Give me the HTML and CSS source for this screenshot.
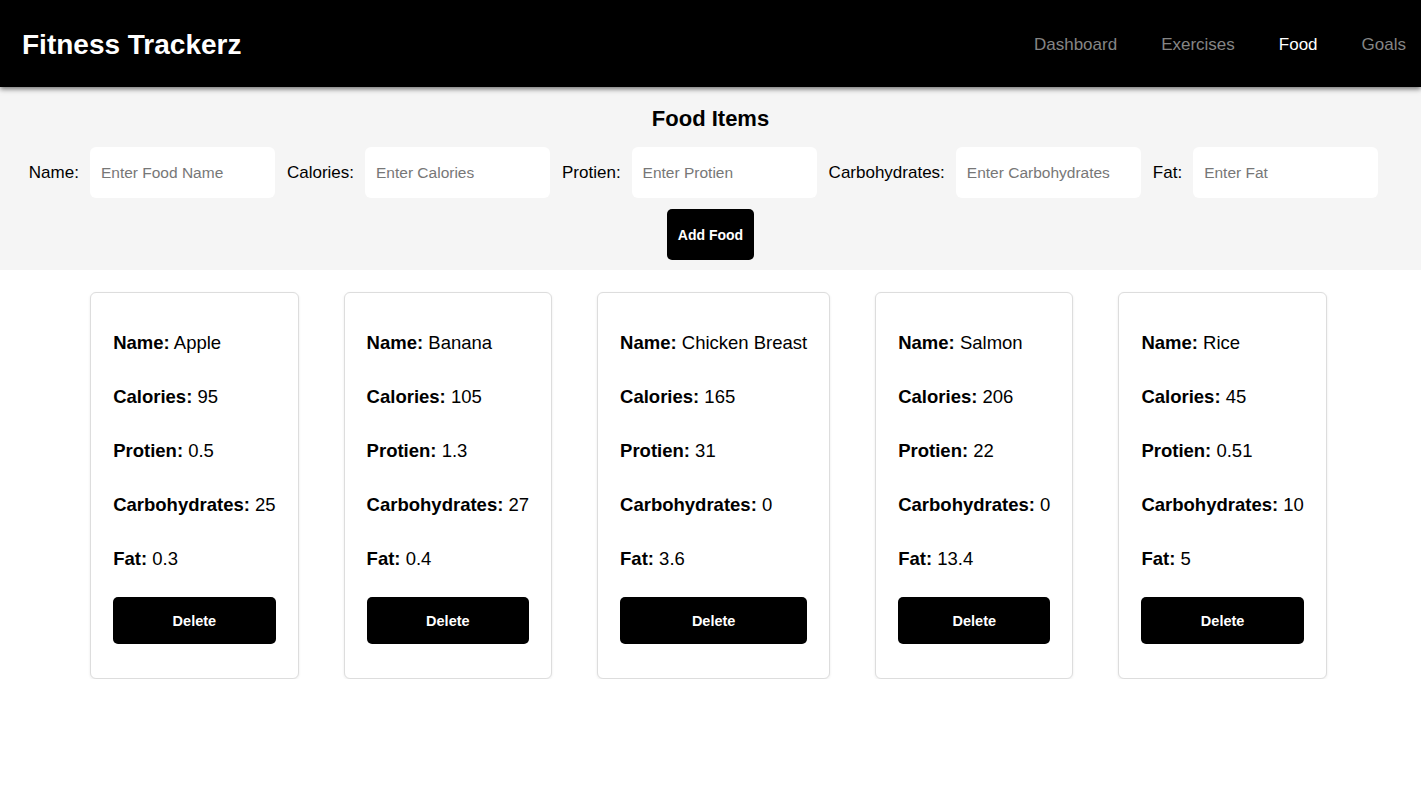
FILE: index.html
```html
<!DOCTYPE html>
<html lang="en">
<head>
<meta charset="utf-8">
<title>Fitness Trackerz</title>
<link rel="stylesheet" href="styles.css">
</head>
<body>
<header class="topbar">
  <div class="brand">Fitness Trackerz</div>
  <nav class="nav">
    <a class="nav-link" href="#">Dashboard</a>
    <a class="nav-link" href="#">Exercises</a>
    <a class="nav-link active" href="#">Food</a>
    <a class="nav-link" href="#">Goals</a>
  </nav>
</header>

<section class="form-panel">
  <h2 class="form-title">Food Items</h2>
  <div class="form-row">
    <label class="field-label">Name:</label>
    <input class="field-input" type="text" placeholder="Enter Food Name">
    <label class="field-label">Calories:</label>
    <input class="field-input" type="text" placeholder="Enter Calories">
    <label class="field-label">Protien:</label>
    <input class="field-input" type="text" placeholder="Enter Protien">
    <label class="field-label">Carbohydrates:</label>
    <input class="field-input" type="text" placeholder="Enter Carbohydrates">
    <label class="field-label">Fat:</label>
    <input class="field-input" type="text" placeholder="Enter Fat">
  </div>
  <button class="add-btn">Add Food</button>
</section>

<main class="cards">
  <div class="card">
    <p><b>Name:</b> Apple</p>
    <p><b>Calories:</b> 95</p>
    <p><b>Protien:</b> 0.5</p>
    <p><b>Carbohydrates:</b> 25</p>
    <p><b>Fat:</b> 0.3</p>
    <button class="delete-btn">Delete</button>
  </div>
  <div class="card">
    <p><b>Name:</b> Banana</p>
    <p><b>Calories:</b> 105</p>
    <p><b>Protien:</b> 1.3</p>
    <p><b>Carbohydrates:</b> 27</p>
    <p><b>Fat:</b> 0.4</p>
    <button class="delete-btn">Delete</button>
  </div>
  <div class="card">
    <p><b>Name:</b> Chicken Breast</p>
    <p><b>Calories:</b> 165</p>
    <p><b>Protien:</b> 31</p>
    <p><b>Carbohydrates:</b> 0</p>
    <p><b>Fat:</b> 3.6</p>
    <button class="delete-btn">Delete</button>
  </div>
  <div class="card">
    <p><b>Name:</b> Salmon</p>
    <p><b>Calories:</b> 206</p>
    <p><b>Protien:</b> 22</p>
    <p><b>Carbohydrates:</b> 0</p>
    <p><b>Fat:</b> 13.4</p>
    <button class="delete-btn">Delete</button>
  </div>
  <div class="card">
    <p><b>Name:</b> Rice</p>
    <p><b>Calories:</b> 45</p>
    <p><b>Protien:</b> 0.51</p>
    <p><b>Carbohydrates:</b> 10</p>
    <p><b>Fat:</b> 5</p>
    <button class="delete-btn">Delete</button>
  </div>
</main>
</body>
</html>
```

FILE: styles.css
```css
* { box-sizing: border-box; }

body {
  margin: 0;
  background: #ffffff;
  color: #000000;
  font-family: "Liberation Sans", Arial, sans-serif;
}

.topbar {
  height: 87px;
  background: #000000;
  display: flex;
  align-items: center;
  justify-content: space-between;
  padding: 3px 15px 0 22px;
  box-shadow: 0 2px 5px rgba(0, 0, 0, 0.55);
  position: relative;
  z-index: 1;
}

.brand {
  color: #ffffff;
  font-size: 28px;
  font-weight: 700;
}

.nav {
  display: flex;
  gap: 44px;
}

.nav-link {
  color: #858585;
  text-decoration: none;
  font-size: 17px;
}

.nav-link.active {
  color: #ffffff;
}

.form-panel {
  background: #f5f5f5;
  height: 183px;
  display: flex;
  flex-direction: column;
  align-items: center;
  padding-top: 16px;
}

.form-title {
  margin: 0;
  font-size: 22px;
  font-weight: 700;
  line-height: 32px;
}

.form-row {
  display: flex;
  align-items: center;
  margin-top: 12px;
  padding-right: 2px;
}

.field-label {
  font-size: 17px;
  margin: 0 11px 0 0;
}

.field-input {
  width: 185px;
  height: 51px;
  border: none;
  border-radius: 6px;
  background: #ffffff;
  padding: 0 11px;
  margin-right: 12px;
  font-family: inherit;
  font-size: 15.5px;
  color: #000;
  outline: none;
}

.field-input::placeholder {
  color: #777777;
}

.add-btn {
  margin-top: 11px;
  height: 51px;
  padding: 0 11px;
  background: #000000;
  color: #ffffff;
  border: none;
  border-radius: 5px;
  font-family: inherit;
  font-size: 14px;
  font-weight: 700;
}

.cards {
  display: flex;
  justify-content: center;
  align-items: flex-start;
  gap: 45px;
  padding-top: 22px;
  padding-right: 4px;
}

.card {
  border: 1px solid #dddddd;
  border-radius: 6px;
  box-shadow: 0 1px 3px rgba(0, 0, 0, 0.08);
  padding: 12px 22px 34px;
  background: #ffffff;
}

.card p {
  margin: 22px 0;
  font-size: 18.5px;
  line-height: 32px;
  white-space: nowrap;
}

.card b {
  font-weight: 700;
}

.delete-btn {
  display: block;
  width: 100%;
  height: 47px;
  margin-top: 0;
  background: #000000;
  color: #ffffff;
  border: none;
  border-radius: 5px;
  font-family: inherit;
  font-size: 14.5px;
  font-weight: 700;
}
```
